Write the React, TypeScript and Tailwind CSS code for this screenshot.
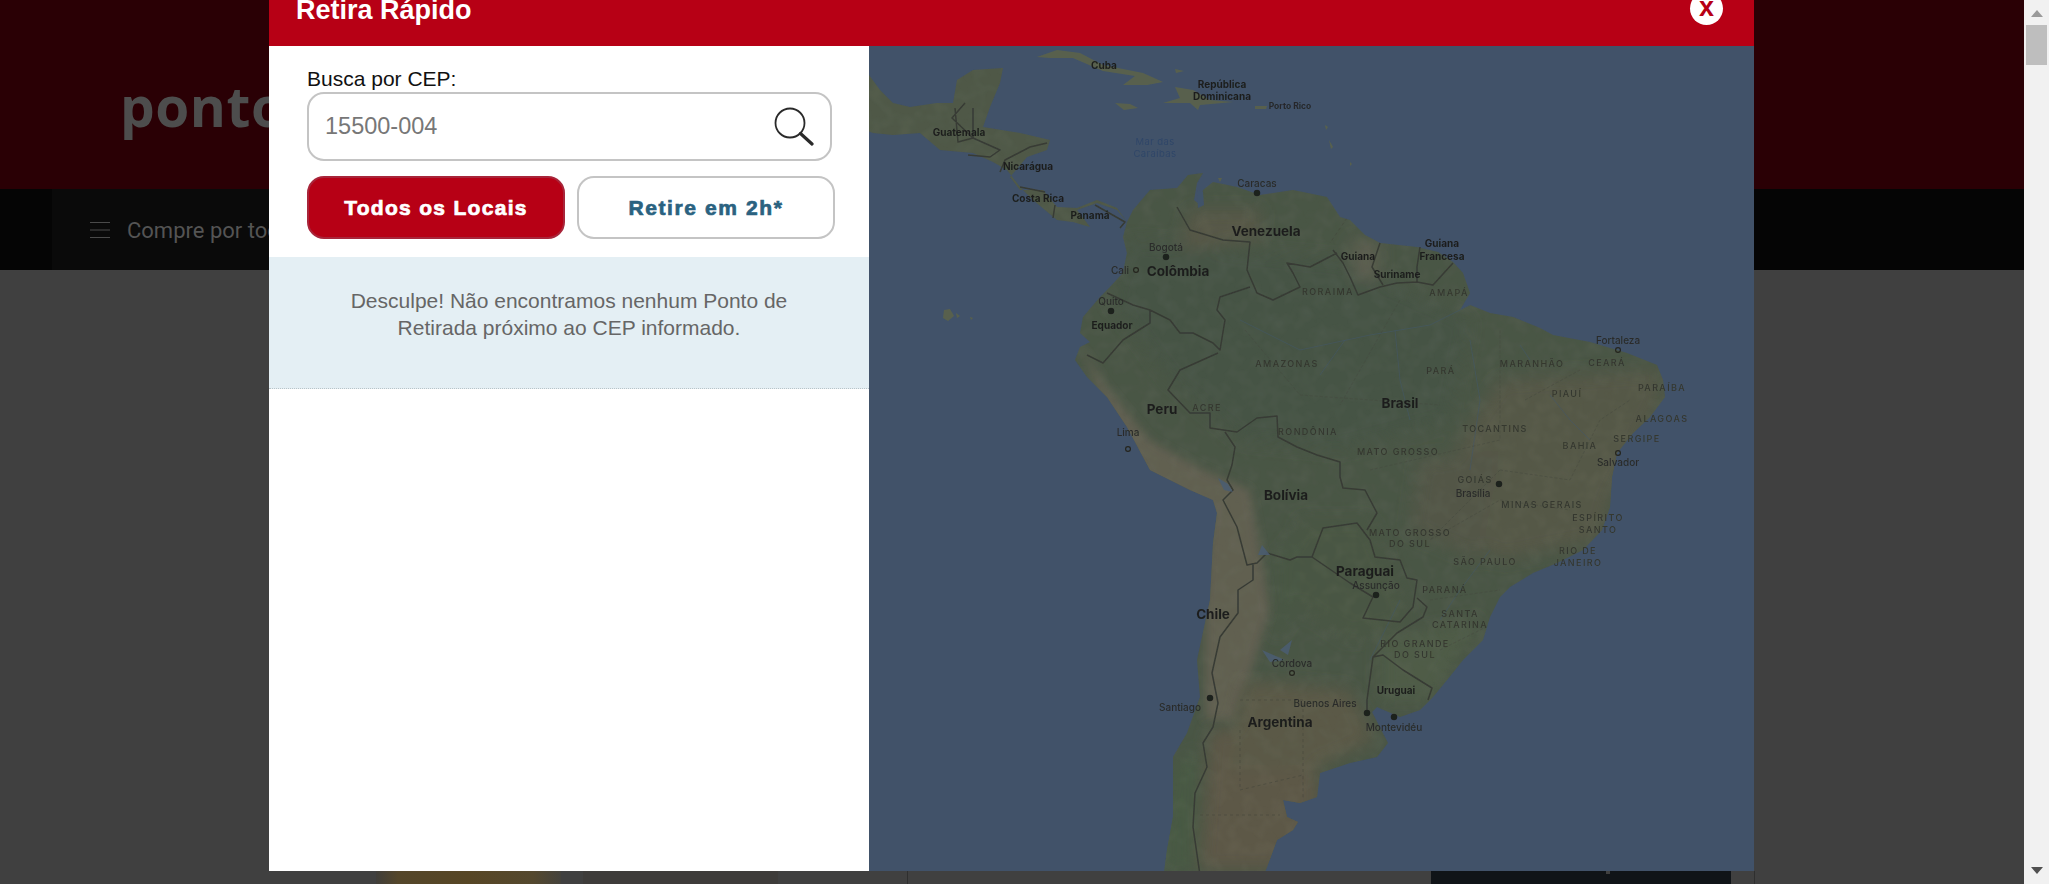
const SOUTH_AMERICA =
  "M1127,222 L1133,210 L1150,190 L1177,188 L1188,175 L1203,173 L1197,183 L1194,200 L1200,205 L1203,190 L1213,182 L1237,187 L1260,195 L1293,190 L1327,197 L1340,217 L1350,220 L1365,235 L1380,243 L1417,247 L1438,252 L1453,262 L1463,273 L1470,293 L1460,310 L1470,305 L1490,313 L1513,317 L1540,328 L1553,335 L1590,342 L1627,353 L1657,365 L1663,380 L1665,397 L1650,417 L1633,433 L1617,453 L1612,477 L1610,507 L1602,530 L1583,550 L1557,563 L1533,573 L1510,587 L1500,597 L1490,617 L1483,640 L1463,660 L1447,680 L1433,697 L1420,710 L1400,717 L1377,707 L1372,712 L1388,743 L1377,757 L1350,763 L1320,773 L1317,797 L1300,803 L1283,800 L1287,817 L1298,822 L1293,830 L1277,840 L1267,867 L1262,880 L1163,880 L1167,850 L1173,817 L1173,757 L1187,733 L1200,697 L1197,660 L1210,600 L1213,543 L1217,513 L1213,500 L1190,490 L1150,470 L1127,427 L1107,397 L1087,377 L1075,360 L1080,347 L1090,342 L1080,333 L1083,317 L1100,297 L1110,287 L1123,273 L1127,253 L1123,237 Z";
const CENTRAL_AMERICA =
  "M1127,222 L1117,210 L1097,203 L1077,210 L1090,227 L1073,222 L1057,220 L1033,200 L1020,187 L1007,170 L993,162 L973,153 L940,150 L920,133 L893,135 L873,133 L860,128 L860,65 L869,75 L880,90 L893,103 L910,107 L937,103 L953,103 L957,80 L973,70 L1003,68 L1000,83 L990,107 L983,127 L1020,133 L1050,140 L1047,150 L1027,157 L1010,177 L1020,190 L1043,190 L1057,207 L1077,208 L1097,200 L1117,208 Z";
const ISLANDS = [
  "M1037,57 L1057,50 L1080,53 L1103,65 L1143,73 L1163,82 L1147,85 L1123,85 L1135,76 L1103,71 L1073,58 L1050,58 Z",
  "M1175,87 L1193,90 L1210,100 L1233,102 L1200,105 L1198,110 L1190,103 L1163,103 L1180,98 Z",
  "M1115,103 L1130,104 L1138,108 L1124,110 Z",
  "M1255,106 L1267,106 L1266,109 L1255,109 Z",
  "M1175,69 L1184,71 L1176,73 Z",
  "M944,310 L950,309 L954,316 L948,321 L943,318 Z",
  "M956,313 L960,316 L957,318 Z",
  "M970,317 L973,318 L971,320 Z",
  "M1325,125 L1328,127 L1326,130 Z",
  "M1329,140 L1333,147 L1331,149 Z",
  "M1350,162 L1352,164 L1350,166 Z",
  "M1218,178 L1222,178 L1220,182 Z",
];

const BORDERS = [
  "M1177,207 L1190,230 L1223,240 L1250,242 L1247,270 L1257,293 L1273,300 L1300,287 L1293,273 L1287,263 L1310,267 L1337,253",
  "M1250,287 L1220,297 L1217,310 L1225,320 L1220,350 L1213,343 L1193,333 L1180,333 L1170,320 L1150,310 L1133,305 L1107,293",
  "M1150,310 L1150,323 L1123,340 L1103,363 L1087,355",
  "M1218,353 L1180,370 L1168,390 L1190,413 L1210,413 L1210,428 L1237,432 L1257,418 L1277,416 L1278,437 L1297,447 L1317,455 L1340,462 L1340,477 L1343,488 L1365,490 L1377,513 L1367,530",
  "M1225,432 L1235,447 L1232,465 L1227,480 L1233,490 L1223,500 L1237,527 L1247,565 L1257,563 L1267,553 L1290,560 L1297,557 L1312,557 L1323,528 L1357,523 L1370,540 L1375,557 L1400,560 L1407,578 L1417,580 L1413,607 L1400,622 L1363,618 L1373,597 L1350,583 L1312,557",
  "M1417,598 L1427,607 L1423,617 L1397,633 L1373,657 L1367,700 L1367,710",
  "M1373,657 L1383,655 L1403,670 L1432,688 L1428,700",
  "M1253,563 L1253,580 L1238,590 L1238,613 L1220,637 L1212,673 L1218,703 L1213,727 L1203,743 L1207,767 L1195,793 L1193,827 L1200,875",
  "M1333,250 L1343,263 L1350,277 L1358,295 L1380,287 L1397,283 L1417,282 L1433,285 L1453,263",
  "M1380,243 L1372,267 L1383,285",
  "M1420,247 L1417,267 L1417,282",
  "M965,103 L952,118 L973,138 L958,142 L955,108 M973,108 L973,138 L1000,150 L990,157 L968,155 M1047,143 L1030,147 L1005,160 L1000,172 M1020,187 L1045,192 M1055,205 L1053,218 M1095,205 L1125,222 L1120,228",
];
const DASHED = "M1347,218 L1330,243 M1240,730 L1240,790 L1303,775 L1303,800 M1240,700 L1303,700 L1303,775 M1200,815 L1280,815";
const STATE_LINES =
  "M1245,330 L1300,395 L1440,405 M1400,300 L1340,405 M1370,470 L1500,440 L1500,330 M1500,470 L1570,480 L1600,420 L1630,400 M1500,470 L1430,540 L1500,500 L1570,510 M1525,400 L1580,370 M1440,650 L1500,620 M1430,600 L1500,590";
const RIVERS =
  "M1240,320 L1300,350 L1370,335 L1430,325 L1470,305 M1395,330 L1400,380 L1410,420 M1345,340 L1320,375 M1470,340 L1480,400 L1470,470 M1520,345 L1530,360 M1590,440 L1570,420 L1550,395 M1490,550 L1460,590 L1440,620 M1400,600 L1370,660";

type Label = { t: string; x: number; y: number; k: "country" | "city" | "place" | "state" | "sea" | "small" };
const LABELS: Label[] = [
  { t: "Cuba", x: 1104, y: 69, k: "place" },
  { t: "República", x: 1222, y: 88, k: "place" },
  { t: "Dominicana", x: 1222, y: 100, k: "place" },
  { t: "Porto Rico", x: 1290, y: 109, k: "small" },
  { t: "Mar das", x: 1155, y: 145, k: "sea" },
  { t: "Caraíbas", x: 1155, y: 157, k: "sea" },
  { t: "Guatemala", x: 959, y: 136, k: "place" },
  { t: "Nicarágua", x: 1028, y: 170, k: "place" },
  { t: "Costa Rica", x: 1038, y: 202, k: "place" },
  { t: "Panamá", x: 1090, y: 219, k: "place" },
  { t: "Caracas", x: 1257, y: 187, k: "city" },
  { t: "Venezuela", x: 1266, y: 236, k: "country" },
  { t: "Bogotá", x: 1166, y: 251, k: "city" },
  { t: "Cali", x: 1120, y: 274, k: "city" },
  { t: "Colômbia", x: 1178, y: 276, k: "country" },
  { t: "Quito", x: 1111, y: 305, k: "city" },
  { t: "Equador", x: 1112, y: 329, k: "place" },
  { t: "Guiana", x: 1358, y: 260, k: "place" },
  { t: "Guiana", x: 1442, y: 247, k: "place" },
  { t: "Francesa", x: 1442, y: 260, k: "place" },
  { t: "Suriname", x: 1397, y: 278, k: "place" },
  { t: "RORAIMA", x: 1328, y: 295, k: "state" },
  { t: "AMAPÁ", x: 1449, y: 296, k: "state" },
  { t: "AMAZONAS", x: 1287, y: 367, k: "state" },
  { t: "PARÁ", x: 1441, y: 374, k: "state" },
  { t: "MARANHÃO", x: 1532, y: 367, k: "state" },
  { t: "CEARÁ", x: 1607, y: 366, k: "state" },
  { t: "Fortaleza", x: 1618, y: 344, k: "city" },
  { t: "PARAÍBA", x: 1662, y: 391, k: "state" },
  { t: "PIAUÍ", x: 1567, y: 397, k: "state" },
  { t: "ALAGOAS", x: 1662, y: 422, k: "state" },
  { t: "SERGIPE", x: 1637, y: 442, k: "state" },
  { t: "BAHIA", x: 1580, y: 449, k: "state" },
  { t: "Salvador", x: 1618, y: 466, k: "city" },
  { t: "TOCANTINS", x: 1495, y: 432, k: "state" },
  { t: "Brasil", x: 1400, y: 408, k: "country" },
  { t: "RONDÔNIA", x: 1308, y: 435, k: "state" },
  { t: "MATO GROSSO", x: 1398, y: 455, k: "state" },
  { t: "GOIÁS", x: 1475, y: 483, k: "state" },
  { t: "Brasília", x: 1473, y: 497, k: "city" },
  { t: "MINAS GERAIS", x: 1542, y: 508, k: "state" },
  { t: "ESPÍRITO", x: 1598, y: 521, k: "state" },
  { t: "SANTO", x: 1598, y: 533, k: "state" },
  { t: "RIO DE", x: 1578, y: 554, k: "state" },
  { t: "JANEIRO", x: 1578, y: 566, k: "state" },
  { t: "SÃO PAULO", x: 1485, y: 565, k: "state" },
  { t: "MATO GROSSO", x: 1410, y: 536, k: "state" },
  { t: "DO SUL", x: 1410, y: 547, k: "state" },
  { t: "Paraguai", x: 1365, y: 576, k: "country" },
  { t: "Assunção", x: 1376, y: 589, k: "city" },
  { t: "PARANÁ", x: 1445, y: 593, k: "state" },
  { t: "SANTA", x: 1460, y: 617, k: "state" },
  { t: "CATARINA", x: 1460, y: 628, k: "state" },
  { t: "RIO GRANDE", x: 1415, y: 647, k: "state" },
  { t: "DO SUL", x: 1415, y: 658, k: "state" },
  { t: "Uruguai", x: 1396, y: 694, k: "place" },
  { t: "Montevidéu", x: 1394, y: 731, k: "city" },
  { t: "Buenos Aires", x: 1325, y: 707, k: "city" },
  { t: "Córdova", x: 1292, y: 667, k: "city" },
  { t: "Chile", x: 1213, y: 619, k: "country" },
  { t: "Santiago", x: 1180, y: 711, k: "city" },
  { t: "Argentina", x: 1280, y: 727, k: "country" },
  { t: "Bolívia", x: 1286, y: 500, k: "country" },
  { t: "Peru", x: 1162, y: 414, k: "country" },
  { t: "ACRE", x: 1207, y: 411, k: "state" },
  { t: "Lima", x: 1128, y: 436, k: "city" },
];
const STYLES = {
  country: { fontSize: 13.5, fontWeight: 700, fill: "#1c1e1c", letterSpacing: 0 },
  place: { fontSize: 10, fontWeight: 700, fill: "#1c1e1c", letterSpacing: 0 },
  small: { fontSize: 8.5, fontWeight: 700, fill: "#26282a", letterSpacing: 0 },
  city: { fontSize: 10, fontWeight: 500, fill: "#2a2c2a", letterSpacing: 0 },
  state: { fontSize: 9, fontWeight: 500, fill: "#34372f", letterSpacing: 1.4 },
  sea: { fontSize: 9.5, fontWeight: 400, fill: "#2f4668", letterSpacing: 0.4 },
};
const SOLID_DOTS = [[1257, 193], [1166, 257], [1111, 311], [1499, 484], [1376, 595], [1394, 717], [1367, 713], [1210, 698]];
const RING_DOTS = [[1136, 270], [1128, 449], [1618, 350], [1618, 453], [1292, 673]];

function MapArt() {
  return (
    <svg viewBox="869 46 885 825" className="block h-full w-full" preserveAspectRatio="none">
      <defs>
        <clipPath id="land">
          <path d={SOUTH_AMERICA} />
          <path d={CENTRAL_AMERICA} />
        </clipPath>
        <filter id="soft" x="-5%" y="-5%" width="110%" height="110%">
          <feGaussianBlur stdDeviation="8" />
        </filter>
        <filter id="mid" x="-5%" y="-5%" width="110%" height="110%">
          <feGaussianBlur stdDeviation="4" />
        </filter>
        <filter id="edge" x="-5%" y="-5%" width="110%" height="110%">
          <feGaussianBlur stdDeviation="0.7" />
        </filter>
        <filter id="txt" x="-5%" y="-5%" width="110%" height="110%">
          <feGaussianBlur stdDeviation="0.45" />
        </filter>
        <filter id="mottle" x="0" y="0" width="100%" height="100%">
          <feTurbulence type="fractalNoise" baseFrequency="0.07" numOctaves="2" seed="7" />
          <feColorMatrix values="0 0 0 0 0.42  0 0 0 0 0.41  0 0 0 0 0.33  1.6 0 0 0 -0.62" />
        </filter>
      </defs>
      <rect x="869" y="46" width="885" height="825" fill="#415269" />
      <g filter="url(#edge)">
        <path d={SOUTH_AMERICA} fill="#505c4a" />
        <path d={CENTRAL_AMERICA} fill="#555f4c" />
        {ISLANDS.map((d) => (
          <path key={d} d={d} fill="#58614d" />
        ))}
      </g>
      <g clipPath="url(#land)">
        <g filter="url(#soft)">
          <path d="M1130,240 L1340,260 L1470,320 L1450,420 L1340,450 L1240,440 L1170,380 L1110,300 Z" fill="#4c5a49" />
          <path d="M1190,210 L1260,210 L1260,240 L1180,250 Z" fill="#5e5f4c" />
          <path d="M1350,240 L1380,240 L1378,280 L1355,280 Z" fill="#656655" />
          <path d="M1500,380 L1660,370 L1660,400 L1610,500 L1600,540 L1500,560 L1440,520 L1460,440 Z" fill="#5d5e4c" />
          <path d="M1420,460 L1500,450 L1480,560 L1410,530 Z" fill="#5a5d4b" />
          <path d="M1300,520 L1370,520 L1410,620 L1350,640 L1290,600 Z" fill="#4f5d47" />
          <path d="M1380,640 L1480,620 L1430,700 L1380,700 Z" fill="#55634c" />
          <path d="M1275,560 L1300,530 L1300,600 L1275,640 Z" fill="#4d5d47" />
        </g>
        <g filter="url(#mid)">
          <path d="M1080,345 L1105,385 L1150,440 L1200,468 L1250,490 L1262,560 L1270,610 L1255,660 L1235,720 L1205,720 L1205,600 L1212,510 L1150,480 L1110,420 Z" fill="#6b6756" />
        </g>
        <g filter="url(#soft)">
          <path d="M1210,730 L1310,725 L1320,800 L1290,870 L1200,870 Z" fill="#665f4b" />
          <path d="M1245,680 L1350,690 L1375,740 L1310,770 L1225,770 Z" fill="#64604c" />
          <path d="M1170,770 L1198,750 L1195,870 L1160,870 Z" fill="#4e6047" />
        </g>
        <rect x="869" y="46" width="885" height="825" filter="url(#mottle)" opacity="0.1" />
        <rect x="869" y="46" width="885" height="825" fill="#2c3430" opacity="0.14" />
        <path d={RIVERS} fill="none" stroke="#44576a" strokeWidth="1" opacity="0.55" />
        <path d={STATE_LINES} fill="none" stroke="#454a3f" strokeWidth="0.7" strokeDasharray="3 2" opacity="0.7" />
        <path d={DASHED} fill="none" stroke="#45463c" strokeWidth="0.8" strokeDasharray="3 3" opacity="0.7" />
      </g>
      <g filter="url(#edge)">
        <path d={BORDERS.join(" ")} fill="none" stroke="#373b34" strokeWidth="1.5" strokeLinejoin="round" />
        <path d="M1218,478 L1228,484 L1233,492 L1224,490 Z M1262,545 L1270,555 L1258,555 Z M1280,650 L1292,640 L1288,655 Z M1262,650 L1285,660 L1270,662 Z" fill="#4a5c70" opacity="0.9" />
        <path d="M1197,190 L1203,192 L1204,205 L1198,208 Z" fill="#415269" />
      </g>
      <g filter="url(#txt)" fontFamily="Inter, 'Open Sans', sans-serif" textAnchor="middle">
        {LABELS.map((l, i) => (
          <text key={i} x={l.x} y={l.y} {...STYLES[l.k]}>
            {l.t}
          </text>
        ))}
        {SOLID_DOTS.map(([x, y]) => (
          <circle key={`${x}-${y}`} cx={x} cy={y} r="3.2" fill="#1e201e" />
        ))}
        {RING_DOTS.map(([x, y]) => (
          <circle key={`${x}-${y}`} cx={x} cy={y} r="2.4" fill="none" stroke="#23251f" strokeWidth="1.2" />
        ))}
      </g>
    </svg>
  );
}

export default function App() {
  return (
    <div className="relative flex h-[884px] w-full overflow-hidden bg-[#404040] font-['Liberation_Sans',sans-serif]">
      <div className="flex min-w-0 flex-1 flex-col">
        <header className="h-[189px] bg-[#2a0005] pl-[120px] pt-[76px]">
          <span className="font-['Open_Sans',sans-serif] text-[55px] font-bold leading-[60px] tracking-[0.5px] text-[#4d4d4d]">ponto</span>
        </header>
        <nav className="flex h-[81px] bg-[#050505]">
          <div className="ml-[52px] flex w-[1700px] items-center gap-[17px] bg-[#0a0a0a] pl-[38px] pt-[1px]">
            <svg width="20" height="18" viewBox="0 0 20 18" className="shrink-0">
              <path d="M0 1.5H20M0 9H20M0 16.5H20" stroke="#4a4a4a" strokeWidth="1.2" />
            </svg>
            <span className="font-['Roboto',sans-serif] text-[22px] text-[#545454]">Compre por todos</span>
          </div>
        </nav>
        <main className="flex flex-1 items-end">
          <div className="flex h-[13px] w-full">
            <div className="ml-[376px] h-full w-[185px] bg-[linear-gradient(90deg,#403e3a_0%,#54462a_12%,#574625_50%,#54482e_85%,#44423c_100%)]" />
            <div className="ml-[22px] h-full w-[195px] bg-[#3e3c3a]" />
            <div className="ml-[129px] h-full w-px bg-[#2f2f2f]" />
            <div className="ml-[523px] h-full w-[300px] bg-[#101418]">
              <div className="ml-[175px] h-[3px] w-[4px] bg-[#404040]" />
            </div>
            <div className="ml-[23px] h-full w-px bg-[#2f2f2f]" />
          </div>
        </main>
      </div>

      <aside className="flex h-full w-[25px] shrink-0 flex-col items-center bg-[#f1f1f1]">
        <svg width="12" height="7" viewBox="0 0 12 7" className="mt-[10px]">
          <path d="M6 0L12 7H0Z" fill="#9a9a9a" />
        </svg>
        <div className="ml-[-1px] mt-[8px] h-[40px] w-[21px] bg-[#bebebe]" />
        <svg width="12" height="7" viewBox="0 0 12 7" className="mb-[10px] mt-auto">
          <path d="M6 7L12 0H0Z" fill="#505050" />
        </svg>
      </aside>

      <section className="absolute left-[269px] top-[-10px] flex h-[881px] w-[1485px] flex-col">
        <div className="relative h-[56px] shrink-0 bg-[#b70015]">
          <h1 className="pl-[27px] pt-[1px] text-[27px] font-bold leading-[38px] text-white">Retira Rápido</h1>
          <button className="absolute left-[1421px] top-[2px] flex h-[33px] w-[33px] items-center justify-center rounded-full bg-white pb-[2px] text-[27px] font-bold leading-none text-[#b70015]">
            x
          </button>
        </div>
        <div className="flex min-h-0 flex-1">
          <div className="flex w-[600px] shrink-0 flex-col bg-white">
            <label className="pl-[38px] pt-[20px] pb-[1px] text-[21px] leading-[25px] text-[#111]">Busca por CEP:</label>
            <div className="ml-[38px] flex h-[69px] w-[525px] items-center rounded-[17px] border-2 border-[#c4c4c4] pl-[16px] pr-[16px] pt-[1px]">
              <input
                readOnly
                placeholder="15500-004"
                className="min-w-0 flex-1 bg-transparent text-[23.5px] text-[#777] outline-none placeholder:text-[#777]"
              />
              <svg width="40" height="40" viewBox="0 0 40 40" className="shrink-0">
                <circle cx="16" cy="16" r="14.5" fill="none" stroke="#2a2a2a" strokeWidth="1.8" />
                <path d="M26.5 26.5L38 37" stroke="#2a2a2a" strokeWidth="3.2" strokeLinecap="round" />
              </svg>
            </div>
            <div className="ml-[38px] mt-[15px] flex gap-[12px]">
              <button className="h-[63px] w-[258px] rounded-[17px] border-2 border-[#a8253a] bg-[#b70015] text-[21px] font-bold tracking-[1.3px] text-white [-webkit-text-stroke:0.7px_#fff]">
                Todos os Locais
              </button>
              <button className="h-[63px] w-[258px] rounded-[17px] border-2 border-[#c4c4c4] bg-white text-[21px] font-bold tracking-[1.6px] text-[#2a6280] [-webkit-text-stroke:0.7px_#2a6280]">
                Retire em 2h*
              </button>
            </div>
            <div className="mt-[18px] h-[132px] border-b border-dotted border-[#b9c4c8] bg-[#e4eff4] px-[60px] pt-[30px] text-center text-[21px] leading-[27px] text-[#666]">
              Desculpe! Não encontramos nenhum Ponto de Retirada próximo ao CEP informado.
            </div>
          </div>
          <div className="min-w-0 flex-1 overflow-hidden bg-[#415269]">
            <MapArt />
          </div>
        </div>
      </section>
    </div>
  );
}
